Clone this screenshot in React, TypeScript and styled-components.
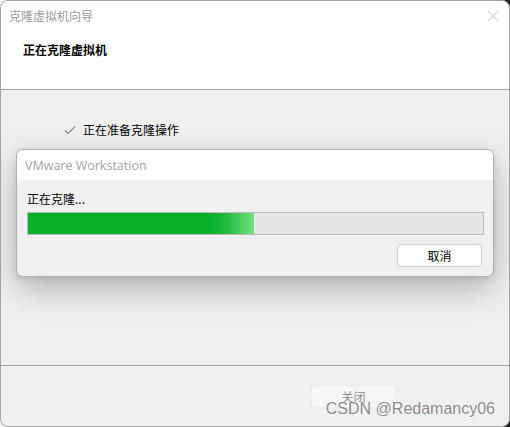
import React from 'react';
import styled, {createGlobalStyle} from 'styled-components';

const GlobalStyle = createGlobalStyle`
    html, body {
        margin: 0;
        padding: 0;
    }

    body {
        width: 510px;
        height: 427px;
        overflow: hidden;
        background: linear-gradient(to right, #f4f4f4 63px, #262626 63px);
        font-family: 'Noto Sans', 'Noto Sans CJK SC', sans-serif;
    }
`;

const cjk = `'Noto Sans CJK SC', 'Noto Sans', sans-serif`;

export default function App() {
    return (
        <>
            <GlobalStyle/>
            <WizardWindow>
                <Header>
                    <TitleBar>
                        <TitleText>{'克隆虚拟机向导'}</TitleText>
                        <CloseButton>
                            <svg width='12' height='12' viewBox='0 0 12 12'>
                                <path d='M1 1 L11 11 M11 1 L1 11' stroke='#d4d4d4' strokeWidth='1.1' fill='none'/>
                            </svg>
                        </CloseButton>
                    </TitleBar>
                    <Heading>{'正在克隆虚拟机'}</Heading>
                </Header>

                <Body>
                    <StepRow>
                        <CheckIcon viewBox='0 0 12 12'>
                            <path d='M1 6.5 L4.2 9.5 L11 2.5' stroke='#4a4a4a' strokeWidth='1' fill='none'/>
                        </CheckIcon>
                        <StepText>{'正在准备克隆操作'}</StepText>
                    </StepRow>
                </Body>

                <Footer>
                    <PushButton disabled={true}>{'关闭'}</PushButton>
                </Footer>

                <ProgressDialog>
                    <DialogTitle>{'VMware Workstation'}</DialogTitle>
                    <DialogBody>
                        <StatusText>{'正在克隆...'}</StatusText>
                        <ProgressTrack>
                            <ProgressFill style={{width: '49.6%'}}/>
                        </ProgressTrack>
                        <DialogActions>
                            <PushButton>{'取消'}</PushButton>
                        </DialogActions>
                    </DialogBody>
                </ProgressDialog>

                <Watermark>{'CSDN @Redamancy06'}</Watermark>
            </WizardWindow>
        </>
    );
}

const WizardWindow = styled.div`
    position: relative;
    box-sizing: border-box;
    width: 510px;
    height: 427px;
    display: flex;
    flex-direction: column;
    border: 1px solid #a3a3a3;
    border-radius: 8px;
    background: #f0f0f0;
    overflow: hidden;
`;

const Header = styled.div`
    height: 88px;
    background: #ffffff;
    border-bottom: 1px solid #a0a0a0;
    display: flex;
    flex-direction: column;
`;

const TitleBar = styled.div`
    height: 29px;
    display: flex;
    align-items: center;
    justify-content: space-between;
    padding: 0 10px 0 8px;
`;

const TitleText = styled.span`
    font-family: ${cjk};
    font-size: 12px;
    color: #9b9b9b;
`;

const CloseButton = styled.span`
    display: flex;
    width: 12px;
    height: 12px;
`;

const Heading = styled.div`
    margin-top: 11px;
    padding-left: 22px;
    font-family: ${cjk};
    font-size: 12px;
    font-weight: 700;
    color: #000000;
`;

const Body = styled.div`
    flex: 1;
    padding: 31px 0 0 63px;
    border-bottom: 1px solid #a0a0a0;
`;

const StepRow = styled.div`
    display: flex;
    align-items: center;
    gap: 7px;
`;

const CheckIcon = styled.svg`
    width: 12px;
    height: 12px;
`;

const StepText = styled.span`
    font-family: ${cjk};
    font-size: 12px;
    line-height: 18px;
    color: #000000;
`;

const Footer = styled.div`
    height: 60px;
    display: flex;
    justify-content: flex-end;
    align-items: flex-start;
    padding: 19px 113px 0 0;
    box-sizing: border-box;
`;

const PushButton = styled.button`
    width: 85px;
    height: 23px;
    box-sizing: border-box;
    border: 1px solid ${props => (props.disabled ? '#ececec' : '#d0d0d0')};
    border-radius: 4px;
    background: ${props => (props.disabled ? '#f6f6f6' : '#fdfdfd')};
    font-family: ${cjk};
    font-size: 12px;
    color: ${props => (props.disabled ? '#8c8c8c' : '#000000')};
    padding: 0;
`;

const ProgressDialog = styled.div`
    position: absolute;
    left: 15px;
    top: 148px;
    width: 478px;
    height: 128px;
    box-sizing: border-box;
    border: 1px solid #b0b0b0;
    border-radius: 7px;
    background: #f0f0f0;
    overflow: hidden;
    box-shadow: 0 12px 34px rgba(0, 0, 0, 0.26), 0 2px 6px rgba(0, 0, 0, 0.1);
    display: flex;
    flex-direction: column;
`;

const DialogTitle = styled.div`
    height: 30px;
    background: #ffffff;
    display: flex;
    align-items: center;
    padding-left: 8px;
    font-family: 'Open Sans', 'Noto Sans', sans-serif;
    font-size: 12.5px;
    color: #a3a3a3;
`;

const DialogBody = styled.div`
    flex: 1;
    padding: 10px 9px 0 10px;
    display: flex;
    flex-direction: column;
`;

const StatusText = styled.div`
    font-family: ${cjk};
    font-size: 12px;
    line-height: 18px;
    color: #000000;
    margin-bottom: 4px;
`;

const ProgressTrack = styled.div`
    height: 23px;
    box-sizing: border-box;
    border: 1px solid #bcbcbc;
    background: #e6e6e6;
`;

const ProgressFill = styled.div`
    height: 100%;
    background: linear-gradient(to right, #06b025 0%, #06b025 80%, #22bb3d 88%, #5ad66a 96%, #6fe07c 100%);
`;

const DialogActions = styled.div`
    display: flex;
    justify-content: flex-end;
    margin-top: 9px;
    padding-right: 2px;
`;

const Watermark = styled.div`
    position: absolute;
    right: 14px;
    bottom: 8px;
    font-family: 'Liberation Sans', Arial, sans-serif;
    font-size: 16px;
    color: #8a8a8a;
    text-shadow: 0 0 2px #ffffff, 0 0 1px #ffffff;
`;
